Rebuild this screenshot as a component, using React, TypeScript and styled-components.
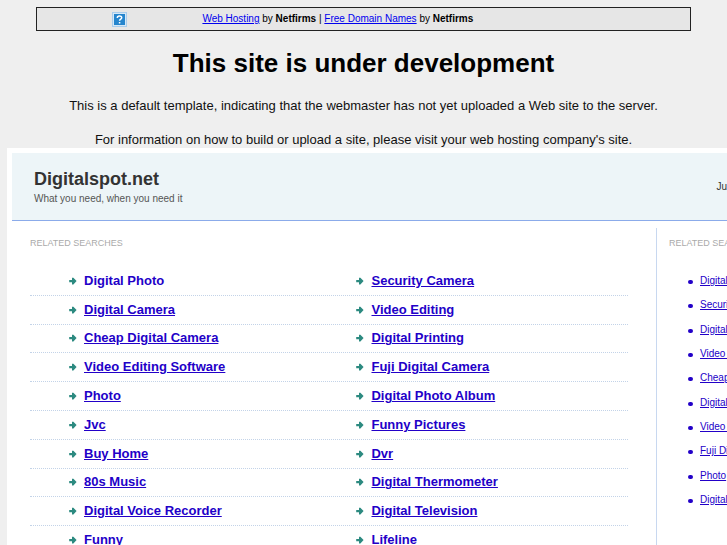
import React from "react";
import styled, { createGlobalStyle } from "styled-components";

const GlobalStyle = createGlobalStyle`
  * { box-sizing: border-box; }
  body {
    margin: 0;
    background: #efefef;
    color: #000;
    font-family: "Liberation Sans", Arial, Helvetica, sans-serif;
    overflow: hidden;
  }
`;

const Page = styled.div`
  padding-top: 7px;
  height: 100vh;
  overflow: hidden;
`;

const HostBar = styled.div`
  display: grid;
  grid-template-columns: 1fr 3fr;
  align-items: center;
  width: 90%;
  height: 24px;
  margin: 0 auto;
  border: 1px solid #222;
  background: #e6e6e6;
  font-size: 10px;
  white-space: nowrap;
`;

const IconCell = styled.div`
  display: flex;
  justify-content: center;
  padding-left: 2px;
`;

const HostText = styled.div`
  padding-left: 2px;
  line-height: 22px;
`;

const HostLink = styled.a`
  color: #0000ee;
`;

const Notice = styled.main`
  text-align: center;
  color: #111;
  font-size: 13px;
  line-height: 17px;
`;

const Title = styled.h1`
  margin: 0;
  padding: 17px 0 19px;
  color: #000;
  font-size: 26px;
  line-height: 30px;
`;

const NoticeText = styled.p`
  margin: 0 0 17px;

  &:last-child {
    margin: 0;
  }
`;

const Portal = styled.section`
  margin-left: 7px;
  border: solid #fff;
  border-width: 5px 0 0 5px;
  background: #fff;
  white-space: nowrap;
`;

const Header = styled.header`
  display: flex;
  justify-content: space-between;
  align-items: center;
  height: 68px;
  padding-left: 22px;
  border-bottom: 1px solid #8babea;
  background: #edf5f8;
`;

const SiteName = styled.h2`
  margin: 0;
  color: #333;
  font-size: 18px;
  line-height: 24px;
`;

const Tagline = styled.p`
  margin: 0;
  color: #555;
  font-size: 10px;
  line-height: 16px;
`;

const DateText = styled.span`
  color: #333;
  font-size: 10px;
`;

const Columns = styled.div`
  display: grid;
  grid-template-columns: minmax(0, 1fr) 71px;
  padding-top: 7px;
`;

const MainColumn = styled.div`
  padding: 0 28px 0 18px;
`;

const SideColumn = styled.aside`
  min-height: 330px;
  padding-left: 12px;
  border-left: 1px solid #c8d8f0;
  overflow: hidden;
`;

const Label = styled.h3`
  margin: 0;
  padding: 8px 0 17px;
  color: #aaa;
  font-size: 9px;
  font-weight: normal;
  line-height: 14px;
`;

const SearchList = styled.ul`
  display: grid;
  grid-auto-rows: 1fr;
  height: 288px;
  margin: 0;
  padding: 0;
  list-style: none;
`;

const SearchRow = styled.li`
  display: grid;
  grid-template-columns: 18fr 17fr;
  align-items: center;
  padding-left: 39px;
  border-bottom: 1px dotted #c3d3e8;
`;

const SearchItem = styled.div`
  display: flex;
  align-items: center;
  gap: 7px;
`;

const SearchLink = styled.a<{ $plain?: boolean }>`
  color: #2200c8;
  font-size: 13px;
  font-weight: bold;
  line-height: 16px;
  text-decoration: ${(p) => (p.$plain ? "none" : "underline")};
`;

const SideList = styled.ul`
  display: grid;
  grid-auto-rows: 1fr;
  align-items: center;
  height: 243px;
  margin: 2px 0 0;
  padding: 0 0 0 19px;
  list-style: none;
`;

const SideItem = styled.li`
  display: flex;
  align-items: center;
  gap: 7px;

  &::before {
    content: "";
    flex: none;
    width: 5px;
    height: 4px;
    margin-top: 2px;
    border-radius: 2px;
    background: #2200c8;
  }
`;

const SideLink = styled.a`
  color: #2200c8;
  font-size: 10px;
  line-height: 14px;
`;

const HelpIcon = () => (
  <svg width="15" height="15" viewBox="0 0 15 15" role="img" aria-label="Help">
    <rect width="15" height="15" fill="#a9cdec" />
    <rect x="1" y="1" width="13" height="13" fill="#d6e8f6" />
    <rect x="2" y="2" width="11" height="11" fill="#2585cd" />
    <path d="M5.3 5.9C5.3 3.5 9.7 3.5 9.7 5.7C9.7 7.2 7.6 7.1 7.6 8.8M7.6 10v1.5" fill="none" stroke="#fff" strokeWidth="1.5" />
  </svg>
);

const ArrowIcon = () => (
  <svg width="8" height="8" viewBox="0 0 8 8" aria-hidden="true">
    <path d="M0.2 3H3V0.8H4.4L7.6 4.1L4.4 7.4H3V5.2H0.2Z" fill="#2c8a80" />
  </svg>
);

const searches = [
  ["Digital Photo", "Security Camera"],
  ["Digital Camera", "Video Editing"],
  ["Cheap Digital Camera", "Digital Printing"],
  ["Video Editing Software", "Fuji Digital Camera"],
  ["Photo", "Digital Photo Album"],
  ["Jvc", "Funny Pictures"],
  ["Buy Home", "Dvr"],
  ["80s Music", "Digital Thermometer"],
  ["Digital Voice Recorder", "Digital Television"],
  ["Funny", "Lifeline"],
];

const sideSearches = [
  "Digital Photo",
  "Security Camera",
  "Digital Camera",
  "Video Editing",
  "Cheap Digital Camera",
  "Digital Printing",
  "Video Editing Software",
  "Fuji Digital Camera",
  "Photo",
  "Digital Photo Album",
];

export default function App() {
  return (
    <Page>
      <GlobalStyle />
      <HostBar>
        <IconCell>
          <HelpIcon />
        </IconCell>
        <HostText>
          <HostLink href="#hosting">Web Hosting</HostLink> by <b>Netfirms</b> |{" "}
          <HostLink href="#domains">Free Domain Names</HostLink> by <b>Netfirms</b>
        </HostText>
      </HostBar>
      <Notice>
        <Title>This site is under development</Title>
        <NoticeText>
          This is a default template, indicating that the webmaster has not yet uploaded a Web site to the server.
        </NoticeText>
        <NoticeText>
          For information on how to build or upload a site, please visit your web hosting company's site.
        </NoticeText>
      </Notice>
      <Portal>
        <Header>
          <div>
            <SiteName>Digitalspot.net</SiteName>
            <Tagline>What you need, when you need it</Tagline>
          </div>
          <DateText>Ju</DateText>
        </Header>
        <Columns>
          <MainColumn>
            <Label>RELATED SEARCHES</Label>
            <SearchList>
              {searches.map((row, index) => (
                <SearchRow key={row[0]}>
                  {row.map((term, column) => (
                    <SearchItem key={term}>
                      <ArrowIcon />
                      <SearchLink href="#search" $plain={index === 0 && column === 0}>
                        {term}
                      </SearchLink>
                    </SearchItem>
                  ))}
                </SearchRow>
              ))}
            </SearchList>
          </MainColumn>
          <SideColumn>
            <Label>RELATED SEARCHES</Label>
            <SideList>
              {sideSearches.map((term) => (
                <SideItem key={term}>
                  <SideLink href="#search">{term}</SideLink>
                </SideItem>
              ))}
            </SideList>
          </SideColumn>
        </Columns>
      </Portal>
    </Page>
  );
}
